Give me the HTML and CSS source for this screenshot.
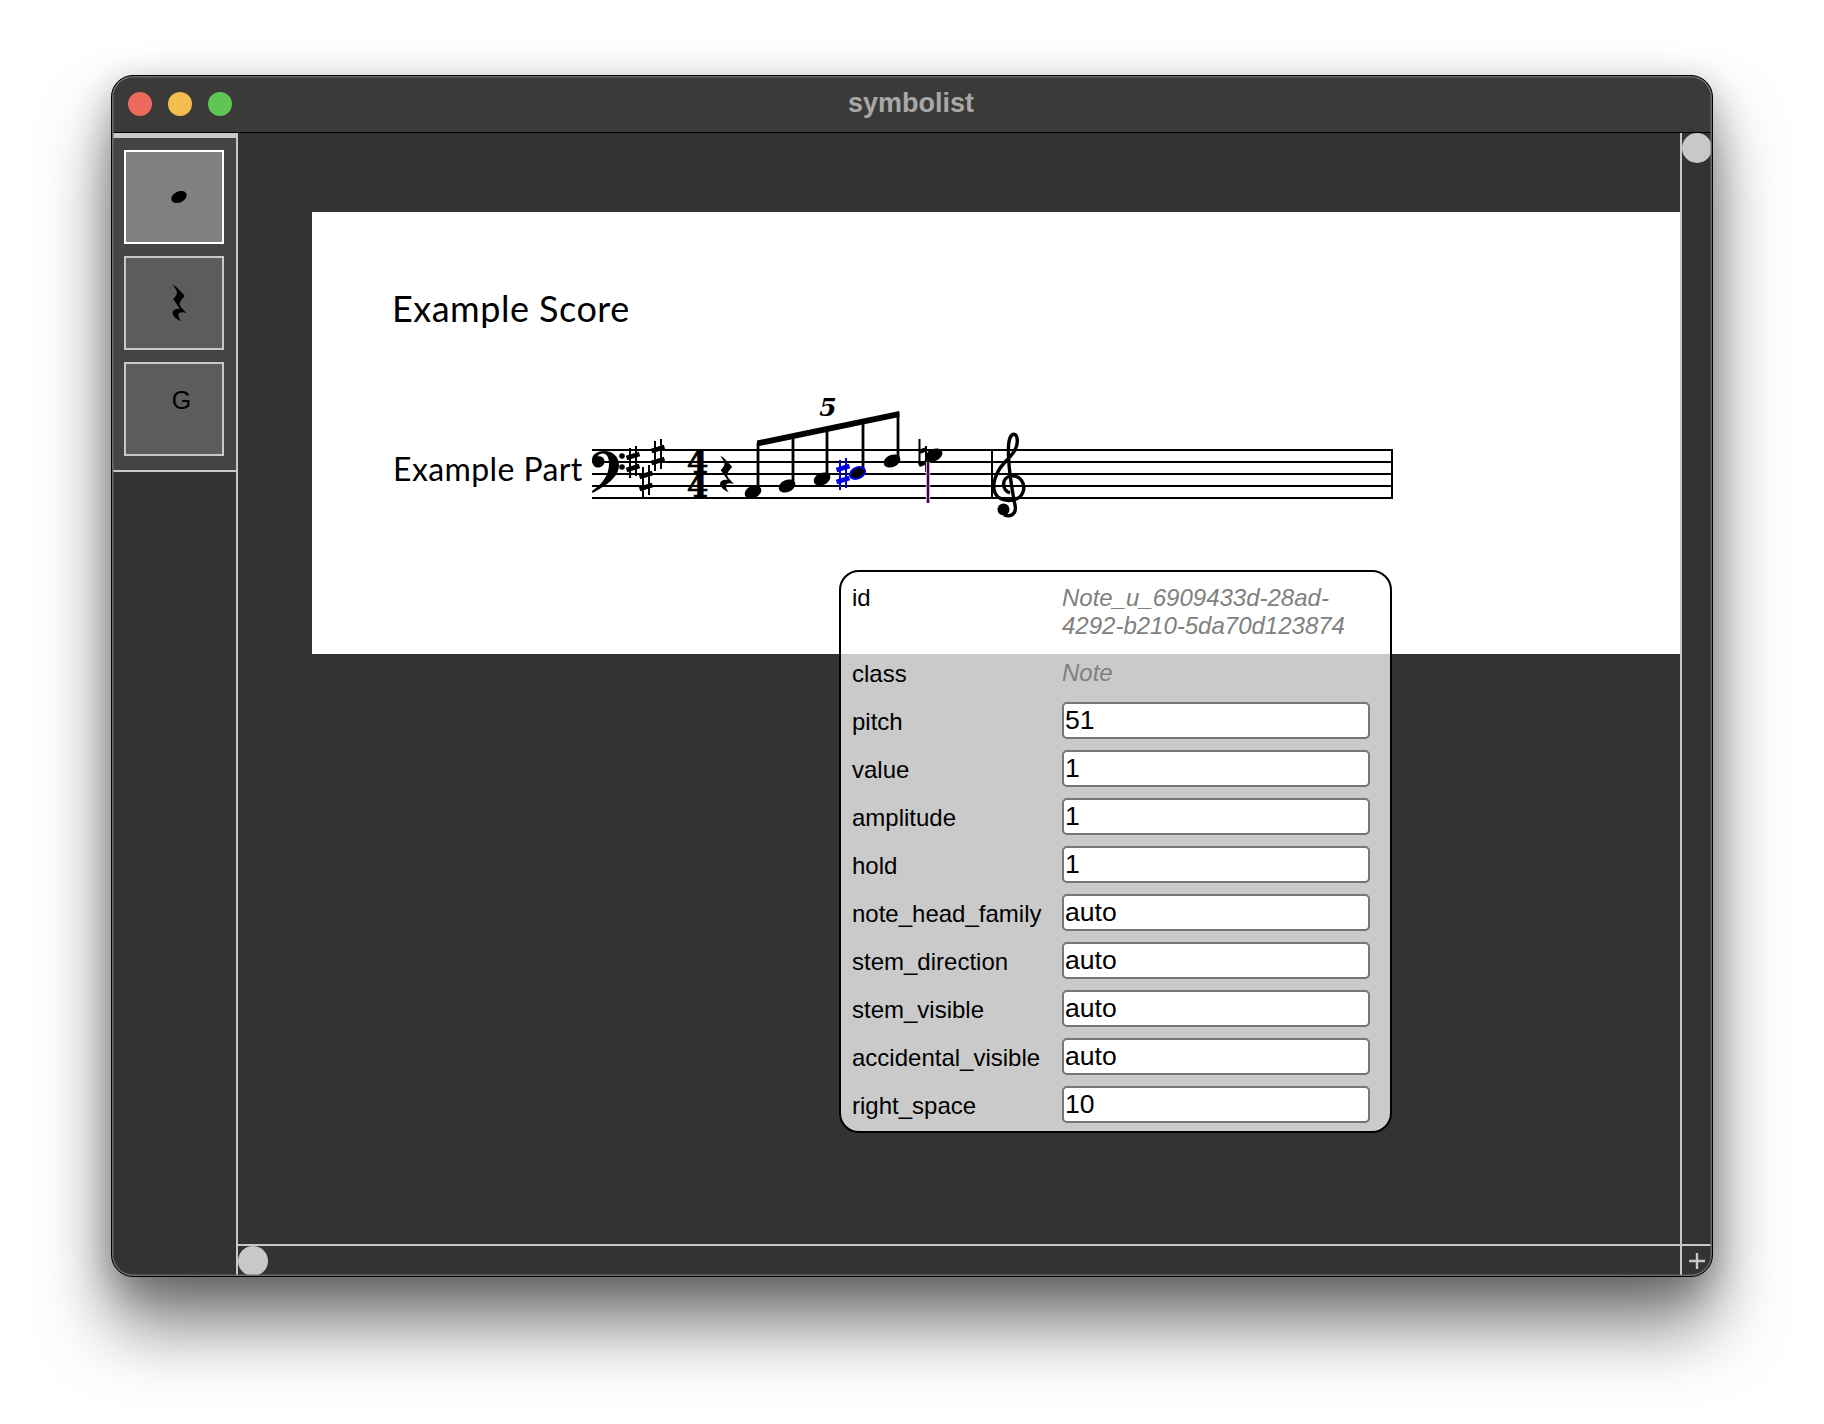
FILE: index.html
```html
<!DOCTYPE html>
<html lang="en">
  <head>
    <meta charset="UTF-8" />
    <meta name="viewport" content="width=device-width, initial-scale=1.0" />
    <title>symbolist</title>
    <link rel="stylesheet" href="styles.css">
  </head>
  <body>
    <svg class="defs" width="0" height="0">
      <defs>
        <path id="rest" transform="scale(1.15 1)" d="M1 0 C3 1 7 5 11 11 C8 15 6 18 7 20.5 C8 23 10.5 25 12.5 28 C9 26.5 6 27 5.5 29.5 C5.3 32 7 34.5 8 36 C4 35 0 30 0.5 27 C1 24 5 23 7 24 L1 14 C3.5 11 5 9 4 6 C3.5 4 1.5 2 1 0 Z"></path>
        <g id="sharp" fill="none" stroke="currentColor">
          <path d="M-3 -14 V16 M3 -16 V14" stroke-width="2"></path>
          <path d="M-6.5 -4 L6.5 -8 M-6.5 8 L6.5 4" stroke-width="4.6"></path>
        </g>
      </defs>
    </svg>

    <div class="window">
      <div class="titlebar">
        <div class="lights">
          <span class="light red"></span>
          <span class="light yellow"></span>
          <span class="light green"></span>
        </div>
        <div class="title">symbolist</div>
      </div>

      <div class="content">
        <div class="sidebar">
          <div class="palette">
            <div class="tool selected">
              <svg class="glyph" width="20" height="16" viewBox="0 0 20 16"><ellipse cx="10" cy="8" rx="8" ry="5.5" transform="rotate(-25 10 8)"></ellipse></svg>
            </div>
            <div class="tool">
              <svg class="glyph" width="20" height="40" viewBox="-3 -2 20 40"><use href="#rest"></use></svg>
            </div>
            <div class="tool">
              <span class="tool-letter">G</span>
            </div>
          </div>
        </div>

        <div class="main">
          <div class="page">
            <div class="score-title">Example Score</div>
            <div class="part">
              <div class="part-name">Example Part</div>
              <svg class="staff" width="810" height="135" viewBox="588 385 810 135">
                <g stroke="#000" stroke-width="2" fill="none">
                  <path d="M592 450 H1392 M592 462 H1392 M592 474 H1392 M592 486 H1392 M592 498 H1392"></path>
                  <path d="M992 449 V499 M1392 449 V499"></path>
                </g>

                <!-- bass clef -->
                <path d="M592 460 C592 454 598 451 604 451 C613 451 619 457 619 465 C619 477 606 486 592.5 493 L592 491 C601 485 609 476 609 464 C609 458 607 453.5 603 453.5 C600 453.5 598 455 597.5 456.5 C601 455.5 605 458 604.5 462 C604 466 600 468 597 467.5 C594 467 592 464 592 460 Z"></path>
                <circle cx="622" cy="456" r="2.8"></circle>
                <circle cx="622" cy="467" r="2.8"></circle>
                <use href="#sharp" x="633" y="462"></use>
                <use href="#sharp" x="646" y="481"></use>
                <use href="#sharp" x="658" y="455"></use>

                <!-- time signature -->
                <text class="timesig" x="697.5" y="473">4</text>
                <text class="timesig" x="697.5" y="497">4</text>

                <use href="#rest" x="719.5" y="456"></use>

                <!-- tuplet -->
                <path d="M758 492 V443 M793 486 V436 M827 479 V429 M863 473 V422 M898 461 V413" stroke="#000" stroke-width="2.8" fill="none"></path>
                <path d="M757 440.5 L899.4 411 V417 L757 446.5 Z"></path>
                <g>
                  <ellipse cx="753" cy="492" rx="8.8" ry="6" transform="rotate(-25 753 492)"></ellipse>
                  <ellipse cx="787" cy="486" rx="8.8" ry="6" transform="rotate(-25 787 486)"></ellipse>
                  <ellipse cx="822" cy="479" rx="8.8" ry="6" transform="rotate(-25 822 479)"></ellipse>
                  <ellipse cx="857.5" cy="473" rx="8" ry="5.4" transform="rotate(-25 857.5 473)" stroke="#0000e6" stroke-width="2"></ellipse>
                  <ellipse cx="892" cy="461" rx="8.8" ry="6" transform="rotate(-25 892 461)"></ellipse>
                  <ellipse cx="934" cy="455" rx="8.8" ry="6" transform="rotate(-25 934 455)"></ellipse>
                </g>
                <use class="selected-sharp" href="#sharp" x="843" y="474"></use>
                <text class="tuplet" x="828" y="416">5</text>

                <!-- natural + selected stem -->
                <path d="M919.5 439 V465 M926 446 V472" stroke="#000" stroke-width="2" fill="none"></path>
                <path d="M919 452 L927 449 M919 465 L927 462" stroke="#000" stroke-width="4.4" fill="none"></path>
                <path d="M928 462 V503" stroke="#e7b6e7" stroke-width="4.4" fill="none"></path>
                <path d="M928 460 V503" stroke="#30103a" stroke-width="2.2" fill="none"></path>

                <!-- treble clef -->
                <path class="clef" d="M1010 493 C1002 490 1001 479 1010 476 C1020 474 1026 484 1023 492 C1020 501 1006 503 998 497 C990 489 994 474 1005 462 C1012 455 1019 448 1017 438 C1016 433 1012 433 1010 438 C1006 448 1010 480 1015 505 C1017 515 1010 517 1004 515"></path>
                <circle cx="1003.5" cy="509.5" r="6"></circle>
              </svg>
            </div>
          </div>

          <div class="inspector">
            <div class="row row-id">
              <div class="key">id</div>
              <div class="static">Note_u_6909433d-28ad-<br>4292-b210-5da70d123874</div>
            </div>
            <div class="row">
              <div class="key">class</div>
              <div class="static">Note</div>
            </div>
            <div class="row">
              <div class="key">pitch</div>
              <input class="field" type="text" value="51" />
            </div>
            <div class="row">
              <div class="key">value</div>
              <input class="field" type="text" value="1" />
            </div>
            <div class="row">
              <div class="key">amplitude</div>
              <input class="field" type="text" value="1" />
            </div>
            <div class="row">
              <div class="key">hold</div>
              <input class="field" type="text" value="1" />
            </div>
            <div class="row">
              <div class="key">note_head_family</div>
              <input class="field" type="text" value="auto" />
            </div>
            <div class="row">
              <div class="key">stem_direction</div>
              <input class="field" type="text" value="auto" />
            </div>
            <div class="row">
              <div class="key">stem_visible</div>
              <input class="field" type="text" value="auto" />
            </div>
            <div class="row">
              <div class="key">accidental_visible</div>
              <input class="field" type="text" value="auto" />
            </div>
            <div class="row">
              <div class="key">right_space</div>
              <input class="field" type="text" value="10" />
            </div>
          </div>
        </div>

        <div class="vscroll"><span class="thumb"></span></div>
        <div class="hscroll"><span class="thumb"></span></div>
        <div class="corner">
          <svg width="16" height="16" viewBox="0 0 16 16"><path d="M8 0 V16 M0 8 H16" stroke="#c8c8c8" stroke-width="2.4"></path></svg>
        </div>
      </div>
    </div>
  </body>
</html>
```

FILE: styles.css
```css
html,
body {
  margin: 0;
  height: 100%;
}
body {
  background: #fff;
  font-family: "Liberation Sans", Arial, sans-serif;
  overflow: hidden;
}
.defs {
  display: block;
  height: 0;
}
.window {
  position: relative;
  box-sizing: border-box;
  width: 1602px;
  height: 1202px;
  margin: 75px 0 0 111px;
  border: 1px solid #000;
  border-radius: 22px;
  background: #333;
  overflow: hidden;
  display: flex;
  flex-direction: column;
  box-shadow: 0 50px 70px rgba(0, 0, 0, 0.5), 0 10px 35px 2px rgba(0, 0, 0, 0.25);
}
.window::after {
  content: "";
  position: absolute;
  inset: 0;
  border-radius: 21px;
  box-shadow: inset 0 0 0 1.5px #6a6a6a;
  pointer-events: none;
}
.titlebar {
  position: relative;
  height: 56px;
  flex: none;
  background: #3c3a39;
  border-bottom: 1px solid #000;
  display: flex;
  align-items: center;
  justify-content: center;
}
.lights {
  position: absolute;
  left: 16px;
  top: 16px;
  display: flex;
  gap: 16px;
}
.light {
  width: 24px;
  height: 24px;
  border-radius: 50%;
}
.red {
  background: #ee6a5f;
}
.yellow {
  background: #f5bd4f;
}
.green {
  background: #61c554;
}
.title {
  color: #a8a8a8;
  font-size: 27px;
  font-weight: bold;
  margin-bottom: 2px;
  margin-right: 2px;
}
.content {
  flex: 1;
  min-height: 0;
  display: grid;
  grid-template-columns: 126px 1fr 32px;
  grid-template-rows: 1fr 32px;
}
.sidebar {
  grid-row: 1 / 3;
  box-sizing: border-box;
  border-right: 2px solid #c8c8c8;
}
.palette {
  box-sizing: border-box;
  height: 339px;
  padding: 12px 12px 0;
  background: #444;
  border-top: 5px solid #c8c8c8;
  border-bottom: 2px solid #c8c8c8;
  display: flex;
  flex-direction: column;
  gap: 12px;
}
.tool {
  box-sizing: border-box;
  width: 100px;
  height: 94px;
  border: 2px solid #c8c8c8;
  background: #5c5c5c;
  display: flex;
  align-items: center;
  justify-content: center;
}
.tool.selected {
  border-color: #fff;
  background: #808080;
}
.glyph {
  margin-left: 10px;
}
.tool-letter {
  margin: 0 0 17px 15px;
  font-size: 25px;
  color: #000;
}
.main {
  position: relative;
  padding: 79px 0 0 74px;
  overflow: hidden;
}
.page {
  box-sizing: border-box;
  height: 442px;
  background: #fff;
  padding: 72px 0 0 80px;
}
.score-title {
  font-family: Lato, sans-serif;
  font-size: 36px;
  letter-spacing: 0.5px;
  line-height: 48px;
  color: #000;
}
.part {
  display: flex;
  align-items: flex-start;
  margin-top: 53px;
  margin-left: 1px;
}
.part-name {
  width: 195px;
  flex: none;
  font-family: Lato, sans-serif;
  font-size: 32px;
  letter-spacing: 0.4px;
  line-height: 40px;
  margin-top: 64px;
}
.staff {
  flex: none;
}
.staff use {
  color: #000;
}
.staff .selected-sharp {
  color: #0000e6;
}
.timesig {
  font-family: "DejaVu Serif", serif;
  font-weight: bold;
  font-size: 31px;
  stroke: #000;
  stroke-width: 0.6;
  text-anchor: middle;
}
.tuplet {
  font-family: "DejaVu Serif", serif;
  font-weight: bold;
  font-style: italic;
  font-size: 25px;
  text-anchor: middle;
}
.clef {
  fill: none;
  stroke: #000;
  stroke-width: 3.4;
}
.inspector {
  position: absolute;
  left: 601px;
  top: 437px;
  box-sizing: border-box;
  width: 553px;
  height: 563px;
  padding: 12px 0 0 11px;
  border: 2px solid #000;
  border-radius: 20px;
  background: rgba(255, 255, 255, 0.74);
  font-size: 24px;
  color: #000;
}
.row {
  height: 48px;
  display: flex;
  align-items: center;
}
.row-id {
  height: 64px;
  align-items: flex-start;
  line-height: 28px;
}
.key {
  width: 210px;
  flex: none;
  padding-top: 3px;
}
.row-id .key {
  padding-top: 0;
}
.static {
  color: #808080;
  font-style: italic;
  padding-top: 2px;
}
.row-id .static {
  padding-top: 0;
}
.field {
  box-sizing: border-box;
  width: 308px;
  height: 37px;
  padding: 0 1px;
  border: 2px solid #767676;
  border-radius: 5px;
  background: #fff;
  font-family: inherit;
  font-size: 26.6px;
  color: #000;
  outline: none;
}
.vscroll {
  border-left: 2px solid #c8c8c8;
}
.hscroll {
  border-top: 2px solid #c8c8c8;
}
.thumb {
  display: block;
  width: 30px;
  height: 30px;
  border-radius: 50%;
  background: #c8c8c8;
}
.corner {
  border-left: 2px solid #c8c8c8;
  border-top: 2px solid #c8c8c8;
  display: flex;
  align-items: center;
  justify-content: center;
}
```
